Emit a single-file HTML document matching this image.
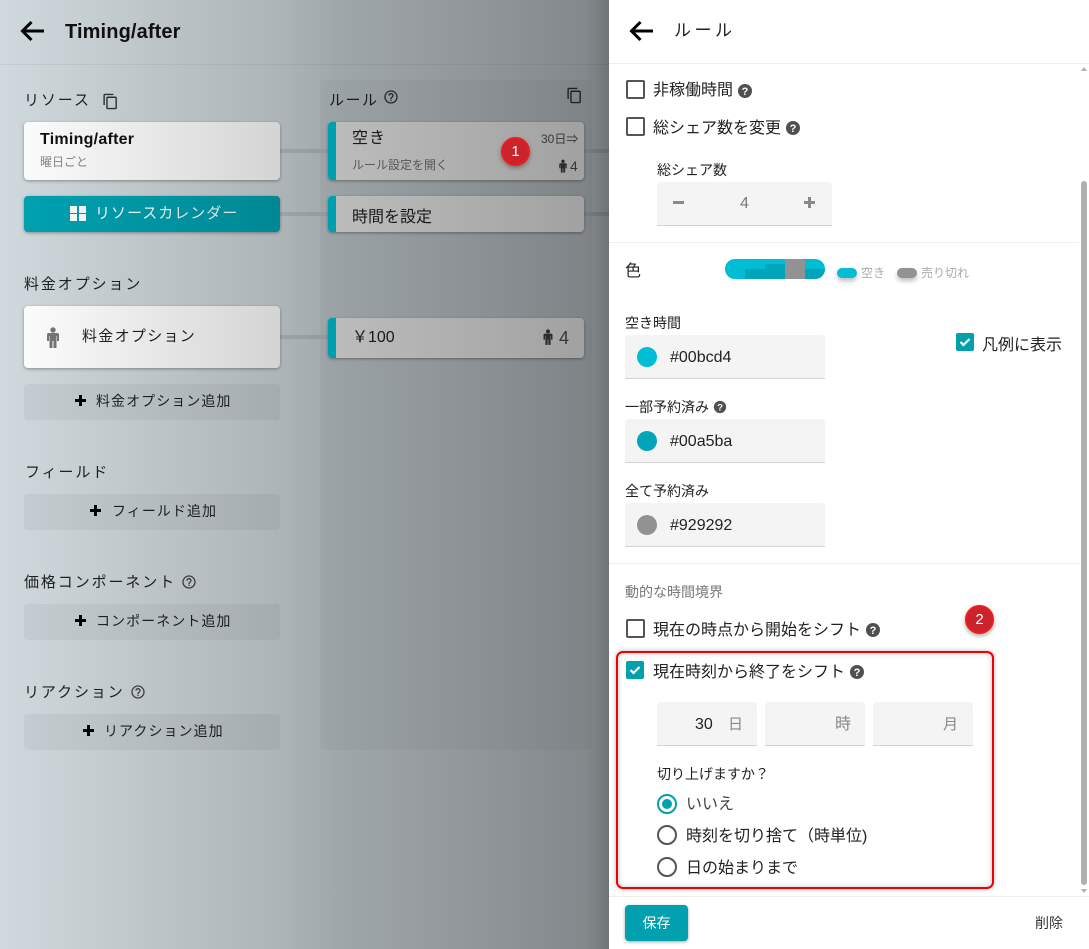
<!DOCTYPE html>
<html lang="ja"><head><meta charset="utf-8"><title>ルール</title>
<style>
html,body{margin:0;padding:0;width:1089px;height:949px;overflow:hidden;background:#fff}
body{position:relative;font-family:"Liberation Sans","Noto Sans CJK JP",sans-serif;color:#222}
#left{position:absolute;left:0;top:0;width:609px;height:949px;background:#d0d9dd;overflow:hidden}
#ov{position:absolute;left:0;top:0;width:609px;height:949px;background:linear-gradient(90deg,rgba(0,0,0,0) 0,rgba(0,0,0,.17) 280px,rgba(0,0,0,.23) 340px,rgba(0,0,0,.37) 585px,rgba(0,0,0,.40) 595px,rgba(0,0,0,.47) 609px);z-index:5}
.a{position:absolute}
.t{position:absolute;white-space:nowrap;line-height:20px}
.card{position:absolute;background:#fff;border-radius:4px;box-shadow:0 1px 3px rgba(0,0,0,.35)}
.rc{background:linear-gradient(90deg,#f3f3f3,#fff)}
.btn{position:absolute;left:24px;width:256px;height:36px;background:#c6cfd3;border-radius:4px}
.stripe{position:absolute;left:0;top:0;bottom:0;width:8px;background:#009fb0;border-radius:4px 0 0 4px;z-index:6}
.conn{position:absolute;height:4px;background:#bcc4c8}
.lab{font-size:15px;letter-spacing:1.9px}
.btxt{font-size:14px;letter-spacing:1.05px}
svg{position:absolute;display:block}
#right{position:absolute;left:609px;top:0;width:480px;height:949px;background:#fff}
.cb{position:absolute;left:626px;width:15px;height:15px;border:2px solid #555;border-radius:2px}
.cbon{position:absolute;width:18px;height:18px;background:#00a0ae;border-radius:2px}
.inp{position:absolute;background:#f4f4f4;border-radius:4px 4px 0 0;border-bottom:1px solid #d2d2d2;box-sizing:border-box;height:44px}
.dv{position:absolute;left:609px;width:470px;height:1px;background:#eee}
.dot{position:absolute;left:637px;width:20px;height:20px;border-radius:50%}
.rad{position:absolute;left:657px;width:16px;height:16px;border:2px solid #555;border-radius:50%}
.badge{position:absolute;width:29px;height:29px;border-radius:50%;background:#c9242b;border:2px solid #ee1c1c;box-sizing:border-box;box-shadow:0 2px 5px rgba(0,0,0,.35);color:#fff;font-size:15px;line-height:25px;text-align:center;z-index:10}
</style></head><body>
<div id="left">
<div class="a" style="left:0;top:64px;width:609px;height:1px;background:#c4cdd1"></div>
<svg style="left:19px;top:17px" width="28" height="28" viewBox="0 0 28 28"><path fill="none" stroke="#000" stroke-width="3" d="M25 14H4M12.500 5L3.500 14L12.500 23"/></svg>
<div class="t" style="left:65px;top:22px;font-size:20px;font-weight:bold;color:#111;letter-spacing:.12px">Timing/after</div>

<div class="t lab" style="left:24px;top:91px">リソース</div>
<svg style="left:102px;top:93px" width="17" height="17" viewBox="0 0 24 24"><path fill="#333" d="M16 1H4c-1.100 0-2 .9-2 2v14h2V3h12V1zm3 4H8c-1.100 0-2 .9-2 2v14c0 1.100.9 2 2 2h11c1.100 0 2-.9 2-2V7c0-1.100-.9-2-2-2zm0 16H8V7h11v14z"/></svg>

<div class="a" style="left:320px;top:80px;width:272px;height:670px;background:#c9d2d6;border-radius:4px"></div>
<div class="t" style="left:329px;top:91px;font-size:15px;letter-spacing:1.500px">ルール</div>
<svg style="left:383px;top:89px" width="16" height="16" viewBox="0 0 24 24"><path fill="#333" d="M11 18h2v-2h-2v2zm1-16C6.480 2 2 6.480 2 12s4.480 10 10 10 10-4.480 10-10S17.520 2 12 2zm0 18c-4.410 0-8-3.590-8-8s3.590-8 8-8 8 3.590 8 8-3.590 8-8 8zm0-14c-2.210 0-4 1.790-4 4h2c0-1.100.9-2 2-2s2 .9 2 2c0 2-3 1.750-3 5h2c0-2.250 3-2.500 3-5 0-2.210-1.790-4-4-4z"/></svg>
<svg style="left:566px;top:87px" width="17" height="17" viewBox="0 0 24 24"><path fill="#333" d="M16 1H4c-1.100 0-2 .9-2 2v14h2V3h12V1zm3 4H8c-1.100 0-2 .9-2 2v14c0 1.100.9 2 2 2h11c1.100 0 2-.9 2-2V7c0-1.100-.9-2-2-2zm0 16H8V7h11v14z"/></svg>

<div class="conn" style="left:280px;top:149px;width:48px"></div>
<div class="conn" style="left:280px;top:212px;width:48px"></div>
<div class="conn" style="left:280px;top:335px;width:48px"></div>
<div class="conn" style="left:584px;top:149px;width:25px"></div>
<div class="conn" style="left:584px;top:212px;width:25px"></div>

<div class="card" style="left:24px;top:122px;width:256px;height:58px"></div>
<div class="t" style="left:40px;top:130px;font-size:16px;font-weight:bold;color:#111;letter-spacing:.25px">Timing/after</div>
<div class="t" style="left:40px;top:152px;font-size:12px;color:#888">曜日ごと</div>

<div class="card" style="left:24px;top:196px;width:256px;height:36px;background:#00a3b2"></div>
<div class="a" style="left:70px;top:206px;width:7px;height:7px;background:#fff"></div>
<div class="a" style="left:79px;top:206px;width:7px;height:7px;background:#fff"></div>
<div class="a" style="left:70px;top:214px;width:7px;height:7px;background:#fff"></div>
<div class="a" style="left:79px;top:214px;width:7px;height:7px;background:#fff"></div>
<div class="t" style="left:95px;top:204px;font-size:15px;letter-spacing:1px;color:#fff">リソースカレンダー</div>

<div class="t lab" style="left:24px;top:275px">料金オプション</div>
<div class="card" style="left:24px;top:306px;width:256px;height:62px"></div>
<svg style="left:45px;top:327px" width="16" height="21" viewBox="0 0 16 21"><circle cx="8" cy="3" r="2.700" fill="#777"/><path fill="#777" d="M2 7.500Q2 6 4 6h8q2 0 2 1.500V14h-2v-5h-.5v12H8.500v-7h-1v7H4.500V9H4v5H2z"/></svg>
<div class="t" style="left:82px;top:327px;font-size:15px;letter-spacing:1.300px">料金オプション</div>

<div class="btn" style="top:384px"></div>
<div class="t btxt" style="left:96px;top:391px">料金オプション追加</div>
<div class="t lab" style="left:25px;top:463px">フィールド</div>
<div class="btn" style="top:494px"></div>
<div class="t btxt" style="left:112px;top:501px">フィールド追加</div>
<div class="t lab" style="left:24px;top:573px">価格コンポーネント</div>
<svg style="left:181px;top:574px" width="16" height="16" viewBox="0 0 24 24"><path fill="#444" d="M11 18h2v-2h-2v2zm1-16C6.480 2 2 6.480 2 12s4.480 10 10 10 10-4.480 10-10S17.520 2 12 2zm0 18c-4.410 0-8-3.590-8-8s3.590-8 8-8 8 3.590 8 8-3.590 8-8 8zm0-14c-2.210 0-4 1.790-4 4h2c0-1.100.9-2 2-2s2 .9 2 2c0 2-3 1.750-3 5h2c0-2.250 3-2.500 3-5 0-2.210-1.790-4-4-4z"/></svg>
<div class="btn" style="top:604px"></div>
<div class="t btxt" style="left:96px;top:611px">コンポーネント追加</div>
<div class="t lab" style="left:24px;top:683px">リアクション</div>
<svg style="left:130px;top:684px" width="16" height="16" viewBox="0 0 24 24"><path fill="#444" d="M11 18h2v-2h-2v2zm1-16C6.480 2 2 6.480 2 12s4.480 10 10 10 10-4.480 10-10S17.520 2 12 2zm0 18c-4.410 0-8-3.590-8-8s3.590-8 8-8 8 3.590 8 8-3.590 8-8 8zm0-14c-2.210 0-4 1.790-4 4h2c0-1.100.9-2 2-2s2 .9 2 2c0 2-3 1.750-3 5h2c0-2.250 3-2.500 3-5 0-2.210-1.790-4-4-4z"/></svg>
<div class="btn" style="top:714px"></div>
<div class="t btxt" style="left:104px;top:721px">リアクション追加</div>
<svg style="left:75px;top:395px" width="11" height="11" viewBox="0 0 11 11"><path fill="#000" d="M4 0h3v4h4v3H7v4H4V7H0V4h4z"/></svg>
<svg style="left:90px;top:505px" width="11" height="11" viewBox="0 0 11 11"><path fill="#000" d="M4 0h3v4h4v3H7v4H4V7H0V4h4z"/></svg>
<svg style="left:75px;top:615px" width="11" height="11" viewBox="0 0 11 11"><path fill="#000" d="M4 0h3v4h4v3H7v4H4V7H0V4h4z"/></svg>
<svg style="left:83px;top:725px" width="11" height="11" viewBox="0 0 11 11"><path fill="#000" d="M4 0h3v4h4v3H7v4H4V7H0V4h4z"/></svg>

<div class="card rc" style="left:328px;top:122px;width:256px;height:58px"><div class="stripe"></div></div>
<div class="t" style="left:352px;top:129px;font-size:16px;letter-spacing:1px">空き</div>
<div class="t" style="left:352px;top:155px;font-size:12px;color:#777">ルール設定を開く</div>
<div class="t" style="left:541px;top:129px;font-size:12px;color:#555">30日⇒</div>
<svg style="left:558px;top:159px" width="10" height="14" viewBox="0 0 16 21"><circle cx="8" cy="3" r="2.700" fill="#444"/><path fill="#444" d="M2 7.500Q2 6 4 6h8q2 0 2 1.500V14h-2v-5h-.5v12H8.500v-7h-1v7H4.500V9H4v5H2z"/></svg>
<div class="t" style="left:570px;top:156px;font-size:14px;color:#555">4</div>

<div class="card rc" style="left:328px;top:196px;width:256px;height:36px"><div class="stripe"></div></div>
<div class="t" style="left:352px;top:208px;font-size:16px">時間を設定</div>

<div class="card rc" style="left:328px;top:318px;width:256px;height:40px"><div class="stripe"></div></div>
<div class="t" style="left:352px;top:328px;font-size:16px">￥100</div>
<svg style="left:542px;top:328px" width="12" height="18" viewBox="0 0 16 21"><circle cx="8" cy="3" r="2.700" fill="#444"/><path fill="#444" d="M2 7.500Q2 6 4 6h8q2 0 2 1.500V14h-2v-5h-.5v12H8.500v-7h-1v7H4.500V9H4v5H2z"/></svg>
<div class="t" style="left:559px;top:328px;font-size:18px;color:#555">4</div>
<div id="ov"></div>
</div>

<div class="badge" style="left:501px;top:137px">1</div>

<div id="right"></div>
<div class="a" style="left:609px;top:63px;width:480px;height:1px;background:#eee"></div>
<svg style="left:628px;top:17px" width="28" height="28" viewBox="0 0 28 28"><path fill="none" stroke="#000" stroke-width="3" d="M25 14H4M12.500 5L3.500 14L12.500 23"/></svg>
<div class="t" style="left:674px;top:21px;font-size:17px;letter-spacing:3.500px;color:#222">ルール</div>
<div class="a" style="left:1081px;top:181px;width:6px;height:704px;background:#b0b0b0;border-radius:3px"></div>
<div class="a" style="left:1081px;top:67px;width:0;height:0;border-left:3px solid transparent;border-right:3px solid transparent;border-bottom:4px solid #b0b0b0"></div>
<div class="a" style="left:1081px;top:889px;width:0;height:0;border-left:3px solid transparent;border-right:3px solid transparent;border-top:4px solid #b0b0b0"></div>

<div class="cb" style="top:80px"></div>
<div class="t" style="left:653px;top:81px;font-size:16px">非稼働時間</div>
<svg style="left:737px;top:83px" width="16" height="16" viewBox="0 0 16 16"><circle cx="8" cy="8" r="7" fill="#505050"/><text x="8" y="12" font-size="11" font-weight="bold" text-anchor="middle" fill="#fff">?</text></svg>
<div class="cb" style="top:117px"></div>
<div class="t" style="left:653px;top:119px;font-size:16px">総シェア数を変更</div>
<svg style="left:785px;top:120px" width="16" height="16" viewBox="0 0 16 16"><circle cx="8" cy="8" r="7" fill="#505050"/><text x="8" y="12" font-size="11" font-weight="bold" text-anchor="middle" fill="#fff">?</text></svg>
<div class="t" style="left:657px;top:160px;font-size:14px">総シェア数</div>
<div class="inp" style="left:657px;top:182px;width:175px"></div>
<div class="a" style="left:673px;top:201px;width:11px;height:3px;background:#888"></div>
<div class="t" style="left:740px;top:194px;font-size:16px;color:#777">4</div>
<svg style="left:804px;top:197px" width="11" height="11" viewBox="0 0 11 11"><path fill="#888" d="M4 0h3v4h4v3H7v4H4V7H0V4h4z"/></svg>
<div class="dv" style="top:242px"></div>

<div class="t" style="left:625px;top:262px;font-size:16px">色</div>
<div class="a" style="left:725px;top:259px;width:100px;height:20px;border-radius:10px;background:#00bcd4;overflow:hidden">
<div class="a" style="left:20px;top:10px;width:20px;height:10px;background:#00a5ba"></div>
<div class="a" style="left:40px;top:5px;width:20px;height:15px;background:#00a5ba"></div>
<div class="a" style="left:60px;top:0;width:20px;height:20px;background:#929292"></div>
<div class="a" style="left:80px;top:10px;width:20px;height:10px;background:#00a5ba"></div>
</div>
<div class="a" style="left:837px;top:268px;width:20px;height:10px;border-radius:5px;background:#00bcd4;box-shadow:0 3px 5px rgba(0,0,0,.25)"></div>
<div class="t" style="left:861px;top:263px;font-size:12px;color:#aaa">空き</div>
<div class="a" style="left:897px;top:268px;width:20px;height:10px;border-radius:5px;background:#929292;box-shadow:0 3px 5px rgba(0,0,0,.25)"></div>
<div class="t" style="left:921px;top:263px;font-size:12px;color:#aaa">売り切れ</div>

<div class="t" style="left:625px;top:313px;font-size:14px">空き時間</div>
<div class="inp" style="left:625px;top:335px;width:200px"></div>
<div class="dot" style="top:347px;background:#00bcd4"></div>
<div class="t" style="left:670px;top:348px;font-size:16px">#00bcd4</div>
<div class="cbon" style="left:956px;top:333px"></div>
<svg style="left:956px;top:333px" width="18" height="18" viewBox="0 0 18 18"><path fill="none" stroke="#fff" stroke-width="2.200" d="M4.500 9l3 3 6-6"/></svg>
<div class="t" style="left:982px;top:336px;font-size:16px">凡例に表示</div>

<div class="t" style="left:625px;top:397px;font-size:14px">一部予約済み</div>
<svg style="left:713px;top:400px" width="14" height="14" viewBox="0 0 16 16"><circle cx="8" cy="8" r="7" fill="#505050"/><text x="8" y="12" font-size="11" font-weight="bold" text-anchor="middle" fill="#fff">?</text></svg>
<div class="inp" style="left:625px;top:419px;width:200px"></div>
<div class="dot" style="top:431px;background:#00a5ba"></div>
<div class="t" style="left:670px;top:432px;font-size:16px">#00a5ba</div>
<div class="t" style="left:625px;top:481px;font-size:14px">全て予約済み</div>
<div class="inp" style="left:625px;top:503px;width:200px"></div>
<div class="dot" style="top:515px;background:#929292"></div>
<div class="t" style="left:670px;top:516px;font-size:16px">#929292</div>
<div class="dv" style="top:563px"></div>

<div class="t" style="left:625px;top:582px;font-size:14px;color:#777">動的な時間境界</div>
<div class="cb" style="top:619px"></div>
<div class="t" style="left:653px;top:621px;font-size:16px">現在の時点から開始をシフト</div>
<svg style="left:865px;top:622px" width="16" height="16" viewBox="0 0 16 16"><circle cx="8" cy="8" r="7" fill="#505050"/><text x="8" y="12" font-size="11" font-weight="bold" text-anchor="middle" fill="#fff">?</text></svg>
<div class="badge" style="left:965px;top:605px">2</div>

<div class="a" style="left:616px;top:651px;width:374px;height:234px;border:2px solid #f00000;border-radius:7px;box-shadow:0 0 5px rgba(0,0,0,.3),inset 0 0 6px rgba(0,0,0,.22)"></div>
<div class="cbon" style="left:626px;top:661px"></div>
<svg style="left:626px;top:661px" width="18" height="18" viewBox="0 0 18 18"><path fill="none" stroke="#fff" stroke-width="2.200" d="M4.500 9l3 3 6-6"/></svg>
<div class="t" style="left:653px;top:663px;font-size:16px">現在時刻から終了をシフト</div>
<svg style="left:849px;top:664px" width="16" height="16" viewBox="0 0 16 16"><circle cx="8" cy="8" r="7" fill="#505050"/><text x="8" y="12" font-size="11" font-weight="bold" text-anchor="middle" fill="#fff">?</text></svg>
<div class="inp" style="left:657px;top:702px;width:100px"></div>
<div class="inp" style="left:765px;top:702px;width:100px"></div>
<div class="inp" style="left:873px;top:702px;width:100px"></div>
<div class="t" style="left:695px;top:715px;font-size:16px">30</div>
<div class="t" style="left:728px;top:715px;font-size:15px;color:#888">日</div>
<div class="t" style="left:835px;top:715px;font-size:16px;color:#888">時</div>
<div class="t" style="left:943px;top:715px;font-size:15px;color:#888">月</div>
<div class="t" style="left:657px;top:764px;font-size:14px">切り上げますか？</div>
<div class="rad" style="top:794px;border-color:#00a0ae"></div>
<div class="a" style="left:662px;top:799px;width:10px;height:10px;border-radius:50%;background:#00a0ae"></div>
<div class="t" style="left:686px;top:795px;font-size:16px;color:#444">いいえ</div>
<div class="rad" style="top:825px"></div>
<div class="t" style="left:686px;top:827px;font-size:16px">時刻を切り捨て（時単位)</div>
<div class="rad" style="top:857px"></div>
<div class="t" style="left:686px;top:859px;font-size:16px">日の始まりまで</div>

<div class="a" style="left:609px;top:896px;width:480px;height:1px;background:#eee"></div>
<div class="a" style="left:625px;top:905px;width:63px;height:36px;background:#00a0ae;border-radius:4px;box-shadow:0 1px 3px rgba(0,0,0,.35);color:#fff;font-size:14px;line-height:37px;text-align:center">保存</div>
<div class="t" style="left:1035px;top:913px;font-size:14px;color:#333">削除</div>
</body></html>
